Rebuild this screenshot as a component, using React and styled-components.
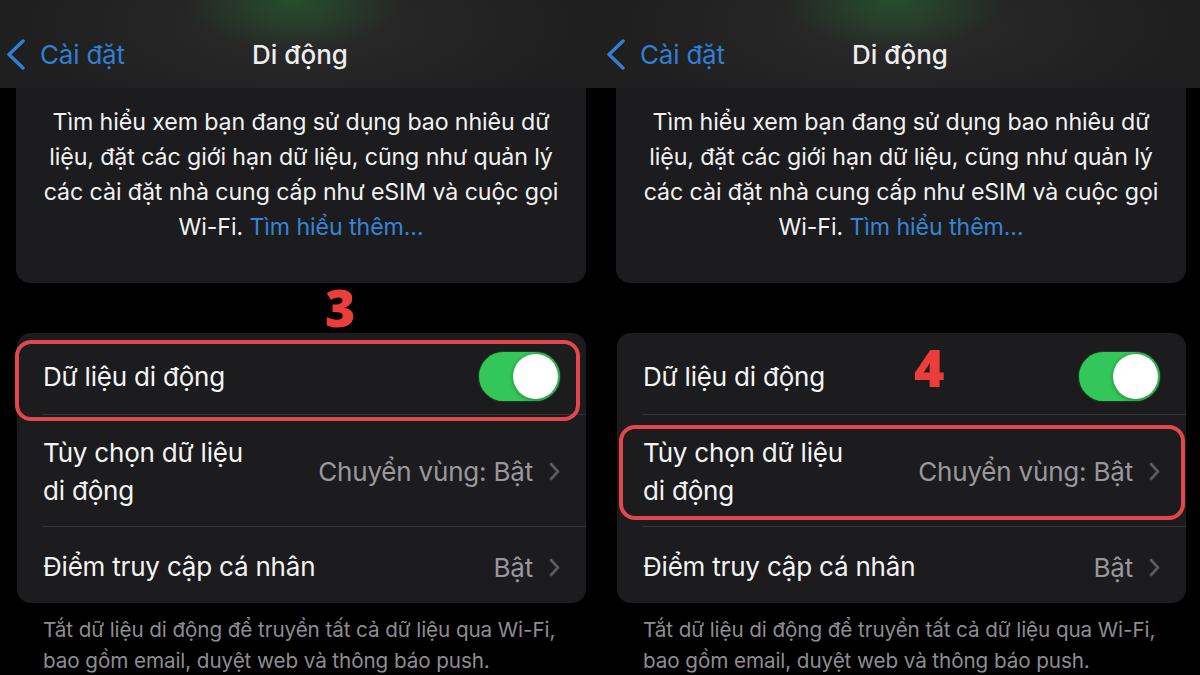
import React from "react";
import styled, { createGlobalStyle } from "styled-components";

const GlobalStyle = createGlobalStyle`
  html, body {
    margin: 0;
    padding: 0;
    background: #000;
  }
  body {
    font-family: Inter, "Noto Sans", "Liberation Sans", sans-serif;
  }
`;

const Screen = styled.div`
  display: flex;
  width: 1200px;
  height: 675px;
  overflow: hidden;
  background: #000;
`;

const Panel = styled.div`
  position: relative;
  width: 600px;
  height: 675px;
  display: flex;
  flex-direction: column;
  overflow: hidden;
`;

const NavBar = styled.div`
  height: 88px;
  flex-shrink: 0;
  display: flex;
  align-items: center;
  padding-left: 6px;
  padding-top: 20px;
  box-sizing: border-box;
  background:
    radial-gradient(ellipse 110px 50px at 49% 0%, rgba(36, 125, 50, 0.45), rgba(36, 125, 50, 0) 100%),
    radial-gradient(ellipse 280px 95px at 50% 30%, #2a2b2a, #1f1f1f 100%);
  position: relative;
`;

const BackLink = styled.div`
  display: flex;
  align-items: center;
  gap: 15px;
  color: #2f7fd6;
  font-size: 26px;
  letter-spacing: -0.2px;
`;

const NavTitle = styled.div`
  position: absolute;
  left: 0;
  right: 0;
  top: 20px;
  bottom: 0;
  display: flex;
  align-items: center;
  justify-content: center;
  color: #eeeeee;
  font-size: 26px;
  font-weight: 500;
  pointer-events: none;
`;

const Content = styled.div`
  display: flex;
  flex-direction: column;
  padding: 0 14px 0 17px;
`;

const InfoCard = styled.div`
  background: #1c1c1e;
  border-radius: 0 0 14px 14px;
  margin-left: -1px;
  padding: 17px 10px 38px;
  text-align: center;
  color: #f2f2f2;
  font-size: 23.2px;
  line-height: 35px;
  letter-spacing: -0.1px;
`;

const Link = styled.span`
  color: #3485d8;
`;

const Group = styled.div`
  margin-top: 50px;
  background: #1c1c1e;
  border-radius: 14px;
  display: flex;
  flex-direction: column;
`;

const Row = styled.div`
  position: relative;
  padding-left: 26px;
  display: flex;
`;

const RowInner = styled.div`
  flex: 1;
  min-height: ${(p) => p.$height}px;
  padding-top: ${(p) => p.$shift || 0}px;
  display: flex;
  align-items: center;
  justify-content: space-between;
  padding-right: 26px;
  border-bottom: ${(p) => (p.$last ? "none" : "1px solid #333336")};
  box-sizing: border-box;
`;

const Label = styled.div`
  color: #f4f4f4;
  font-size: 26px;
  line-height: 38px;
  letter-spacing: -0.2px;
`;

const Value = styled.div`
  display: flex;
  align-items: center;
  gap: 16px;
  color: #98989d;
  font-size: 26px;
  letter-spacing: -0.2px;
`;

const Switch = styled.div`
  width: 81px;
  height: 49px;
  border-radius: 25px;
  background: #33c659;
  display: flex;
  align-items: center;
  justify-content: flex-end;
  padding-right: 2px;
  box-sizing: border-box;
  box-shadow: 0 0 2px rgba(51, 198, 89, 0.6);
`;

const Knob = styled.div`
  width: 45px;
  height: 45px;
  border-radius: 50%;
  background: #fff;
  box-shadow: 0 1px 4px rgba(0, 0, 0, 0.35);
`;

const Highlight = styled.div`
  position: absolute;
  top: ${(p) => p.$top}px;
  bottom: ${(p) => p.$bottom}px;
  left: ${(p) => p.$left}px;
  right: ${(p) => p.$right}px;
  border: 4px solid #e2474b;
  border-radius: 16px;
  pointer-events: none;
`;

const StepNumber = styled.div`
  position: absolute;
  left: ${(p) => p.$x}px;
  top: ${(p) => p.$y}px;
  color: #ec3d3d;
  font-family: "Open Sans", "Liberation Sans", sans-serif;
  font-weight: 800;
  font-size: 52px;
  line-height: 1;
`;

const Footnote = styled.div`
  padding: 11px 10px 0 26px;
  color: #8d8d92;
  font-size: 20.7px;
  line-height: 31px;
  letter-spacing: -0.1px;
`;

const Chevron = ({ color = "#2f7fd6" }) => (
  <svg width="19" height="31" viewBox="0 0 19 31" fill="none">
    <path
      d="M17 2 L3 15.5 L17 29"
      stroke={color}
      strokeWidth="3.5"
      strokeLinecap="round"
      strokeLinejoin="round"
    />
  </svg>
);

const Disclosure = () => (
  <svg width="11" height="19" viewBox="0 0 11 19" fill="none">
    <path
      d="M2 2 L9 9.5 L2 17"
      stroke="#5c5c60"
      strokeWidth="2.6"
      strokeLinecap="round"
      strokeLinejoin="round"
    />
  </svg>
);

const Phone = ({ step }) => (
  <Panel>
    <NavBar>
      <BackLink>
        <Chevron />
        <span>Cài đặt</span>
      </BackLink>
      <NavTitle>Di động</NavTitle>
    </NavBar>
    <Content>
      <InfoCard>
        Tìm hiểu xem bạn đang sử dụng bao nhiêu dữ
        <br />
        liệu, đặt các giới hạn dữ liệu, cũng như quản lý
        <br />
        các cài đặt nhà cung cấp như eSIM và cuộc gọi
        <br />
        Wi-Fi. <Link>Tìm hiểu thêm...</Link>
      </InfoCard>

      <Group>
        <Row>
          <RowInner $height={82} $shift={6}>
            <Label>Dữ liệu di động</Label>
            <Switch>
              <Knob />
            </Switch>
          </RowInner>
          {step === 3 && <Highlight $top={7} $bottom={-6} $left={-2} $right={6} />}
        </Row>
        <Row>
          <RowInner $height={112} $shift={2}>
            <Label>
              Tùy chọn dữ liệu
              <br />
              di động
            </Label>
            <Value>
              Chuyển vùng: Bật
              <Disclosure />
            </Value>
          </RowInner>
          {step === 4 && <Highlight $top={10} $bottom={7} $left={2} $right={1} />}
        </Row>
        <Row>
          <RowInner $height={76} $shift={4} $last>
            <Label>Điểm truy cập cá nhân</Label>
            <Value>
              Bật
              <Disclosure />
            </Value>
          </RowInner>
        </Row>
      </Group>

      <Footnote>
        Tắt dữ liệu di động để truyền tất cả dữ liệu qua Wi-Fi,
        <br />
        bao gồm email, duyệt web và thông báo push.
      </Footnote>
    </Content>

    {step === 3 && <StepNumber $x={325} $y={281}>3</StepNumber>}
    {step === 4 && <StepNumber $x={314} $y={341}>4</StepNumber>}
  </Panel>
);

export default function App() {
  return (
    <>
      <GlobalStyle />
      <Screen>
        <Phone step={3} />
        <Phone step={4} />
      </Screen>
    </>
  );
}
